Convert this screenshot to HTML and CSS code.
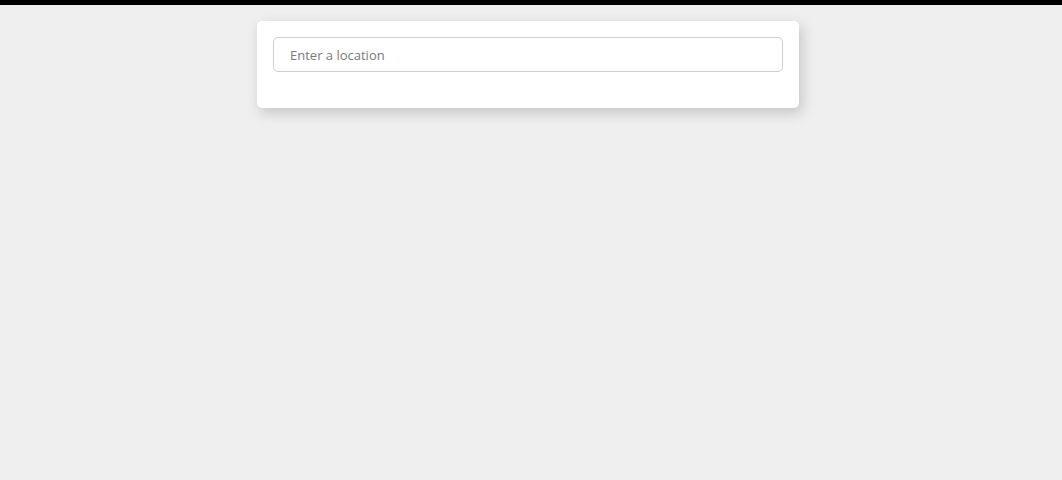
FILE: index.html
```html
<!DOCTYPE html>
<html>
<head>
<meta charset="utf-8">
<link rel="stylesheet" href="styles.css">
</head>
<body>
<div class="topbar"></div>
<div class="wrap">
  <div class="card">
    <input class="search" type="text" placeholder="Enter a location">
  </div>
</div>
</body>
</html>
```
FILE: styles.css
```css
html, body {
  margin: 0;
  padding: 0;
  background: #efefef;
  height: 100%;
}
.topbar {
  height: 5px;
  background: #000;
}
.wrap {
  display: flex;
  justify-content: center;
  padding-right: 6px;
  padding-top: 16px;
}
.card {
  width: 542px;
  box-sizing: border-box;
  background: #fff;
  border-radius: 5px;
  padding: 16px 16px 36px 16px;
  box-shadow: 3px 5px 14px rgba(0,0,0,0.18);
}
.search {
  display: block;
  width: 100%;
  height: 35px;
  box-sizing: border-box;
  border: 1px solid #cfcfcf;
  border-radius: 5px;
  padding: 0 16px;
  font-family: "Open Sans", sans-serif;
  font-size: 13px;
  color: #333;
  outline: none;
  background: #fff;
}
.search::placeholder {
  color: #7a7a7a;
}
```
